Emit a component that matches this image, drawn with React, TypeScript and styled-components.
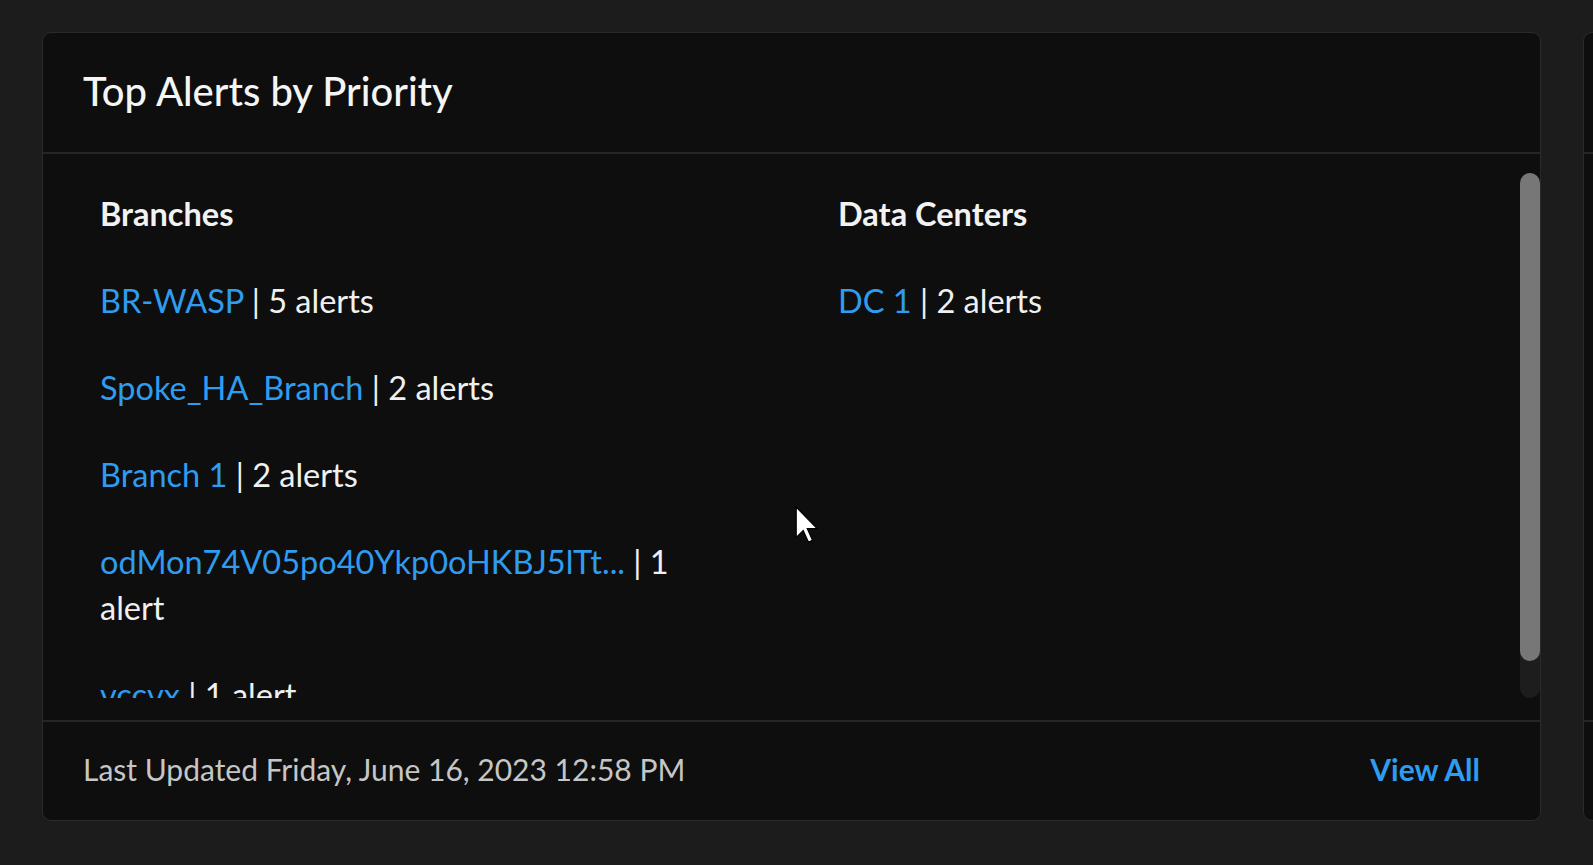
import React from "react";
import styled, { createGlobalStyle } from "styled-components";

const GlobalStyle = createGlobalStyle`
  html, body {
    margin: 0;
    padding: 0;
    background: #1c1c1c;
    overflow: hidden;
  }
  body {
    font-family: Lato, "Open Sans", sans-serif;
  }
`;

const Page = styled.div`
  position: relative;
  display: flex;
  gap: 42px;
  padding: 32px 0 0 42px;
  width: 1593px;
  height: 865px;
  box-sizing: border-box;
  overflow: hidden;
`;

const Card = styled.section`
  flex: 0 0 1499px;
  height: 789px;
  box-sizing: border-box;
  display: flex;
  flex-direction: column;
  background: #0e0e0e;
  border: 1px solid #2a2a2a;
  border-radius: 9px;
`;

const Header = styled.header`
  height: 121px;
  flex: 0 0 auto;
  box-sizing: border-box;
  display: flex;
  align-items: center;
  padding: 0 40px 4px;
  border-bottom: 2px solid #262626;
`;

const Title = styled.h2`
  margin: 0;
  font-size: 40px;
  font-weight: 500;
  color: #f5f5f5;
`;

const Body = styled.div`
  position: relative;
  flex: 1;
  padding: 19px 0;
`;

// scroll area; its bar is drawn by ScrollTrack since the browser hides native bars
const Scroll = styled.div`
  height: 525px;
  overflow: hidden;
  box-sizing: border-box;
  padding: 23px 60px 24px 57px;
  display: grid;
  grid-template-columns: 610px 1fr;
  column-gap: 128px;
  align-items: start;
`;

const ScrollTrack = styled.div`
  position: absolute;
  top: 19px;
  right: 0;
  width: 20px;
  height: 525px;
  background: #1d1d1d;
  border-radius: 10px;
`;

const ScrollThumb = styled.div<{ $size: number }>`
  width: 100%;
  height: ${(p) => p.$size}px;
  background: #777777;
  border-radius: 10px;
`;

const Column = styled.div`
  display: flex;
  flex-direction: column;
`;

const ColumnTitle = styled.h3`
  margin: 0 0 46px;
  font-size: 32.5px;
  line-height: 36px;
  font-weight: 700;
  color: #f2f2f2;
`;

const List = styled.ul`
  list-style: none;
  margin: 0;
  padding: 0;
  display: flex;
  flex-direction: column;
  gap: 41px;
`;

const Item = styled.li`
  font-size: 32.5px;
  line-height: 46px;
  color: #f0f0f0;
`;

const SiteLink = styled.a`
  color: #2f9cf0;
  text-decoration: none;
  cursor: pointer;
`;

const Footer = styled.footer`
  height: 100px;
  flex: 0 0 auto;
  box-sizing: border-box;
  display: flex;
  align-items: center;
  justify-content: space-between;
  padding: 0 60px 4px 40px;
  border-top: 2px solid #262626;
`;

const Updated = styled.span`
  font-size: 30px;
  color: #c6c6c6;
`;

const ViewAll = styled.a`
  font-size: 30px;
  font-weight: 700;
  color: #2f9cf0;
  text-decoration: none;
  cursor: pointer;
`;

const Pointer = styled.svg`
  position: absolute;
  left: 795px;
  top: 506px;
  pointer-events: none;
`;

const branches = [
  { name: "BR-WASP", count: 5 },
  { name: "Spoke_HA_Branch", count: 2 },
  { name: "Branch 1", count: 2 },
  { name: "odMon74V05po40Ykp0oHKBJ5lTt...", count: 1 },
  { name: "vccvx", count: 1 },
];

const dataCenters = [{ name: "DC 1", count: 2 }];

const alertLabel = (n: number) => `${n} ${n === 1 ? "alert" : "alerts"}`;

const SiteList = ({ title, sites }: { title: string; sites: { name: string; count: number }[] }) => (
  <Column>
    <ColumnTitle>{title}</ColumnTitle>
    <List>
      {sites.map((s) => (
        <Item key={s.name}>
          <SiteLink>{s.name}</SiteLink> | {alertLabel(s.count)}
        </Item>
      ))}
    </List>
  </Column>
);

const App = () => {
  return (
    <>
      <GlobalStyle />
      <Page>
        <Card>
          <Header>
            <Title>Top Alerts by Priority</Title>
          </Header>
          <Body>
            <Scroll>
              <SiteList title="Branches" sites={branches} />
              <SiteList title="Data Centers" sites={dataCenters} />
            </Scroll>
            <ScrollTrack>
              <ScrollThumb $size={488} />
            </ScrollTrack>
          </Body>
          <Footer>
            <Updated>Last Updated Friday, June 16, 2023 12:58 PM</Updated>
            <ViewAll>View All</ViewAll>
          </Footer>
        </Card>
        <Card>
          <Header />
          <Body />
          <Footer />
        </Card>
        <Pointer width="28" height="43" viewBox="0 0 24 37">
          <path d="M1 1 L1 27 L7 21 L11.5 31 L15 29.5 L10.5 19.5 L19 19.5 Z" fill="#ffffff" stroke="#000" strokeWidth="1" />
        </Pointer>
      </Page>
    </>
  );
};

export default App;
